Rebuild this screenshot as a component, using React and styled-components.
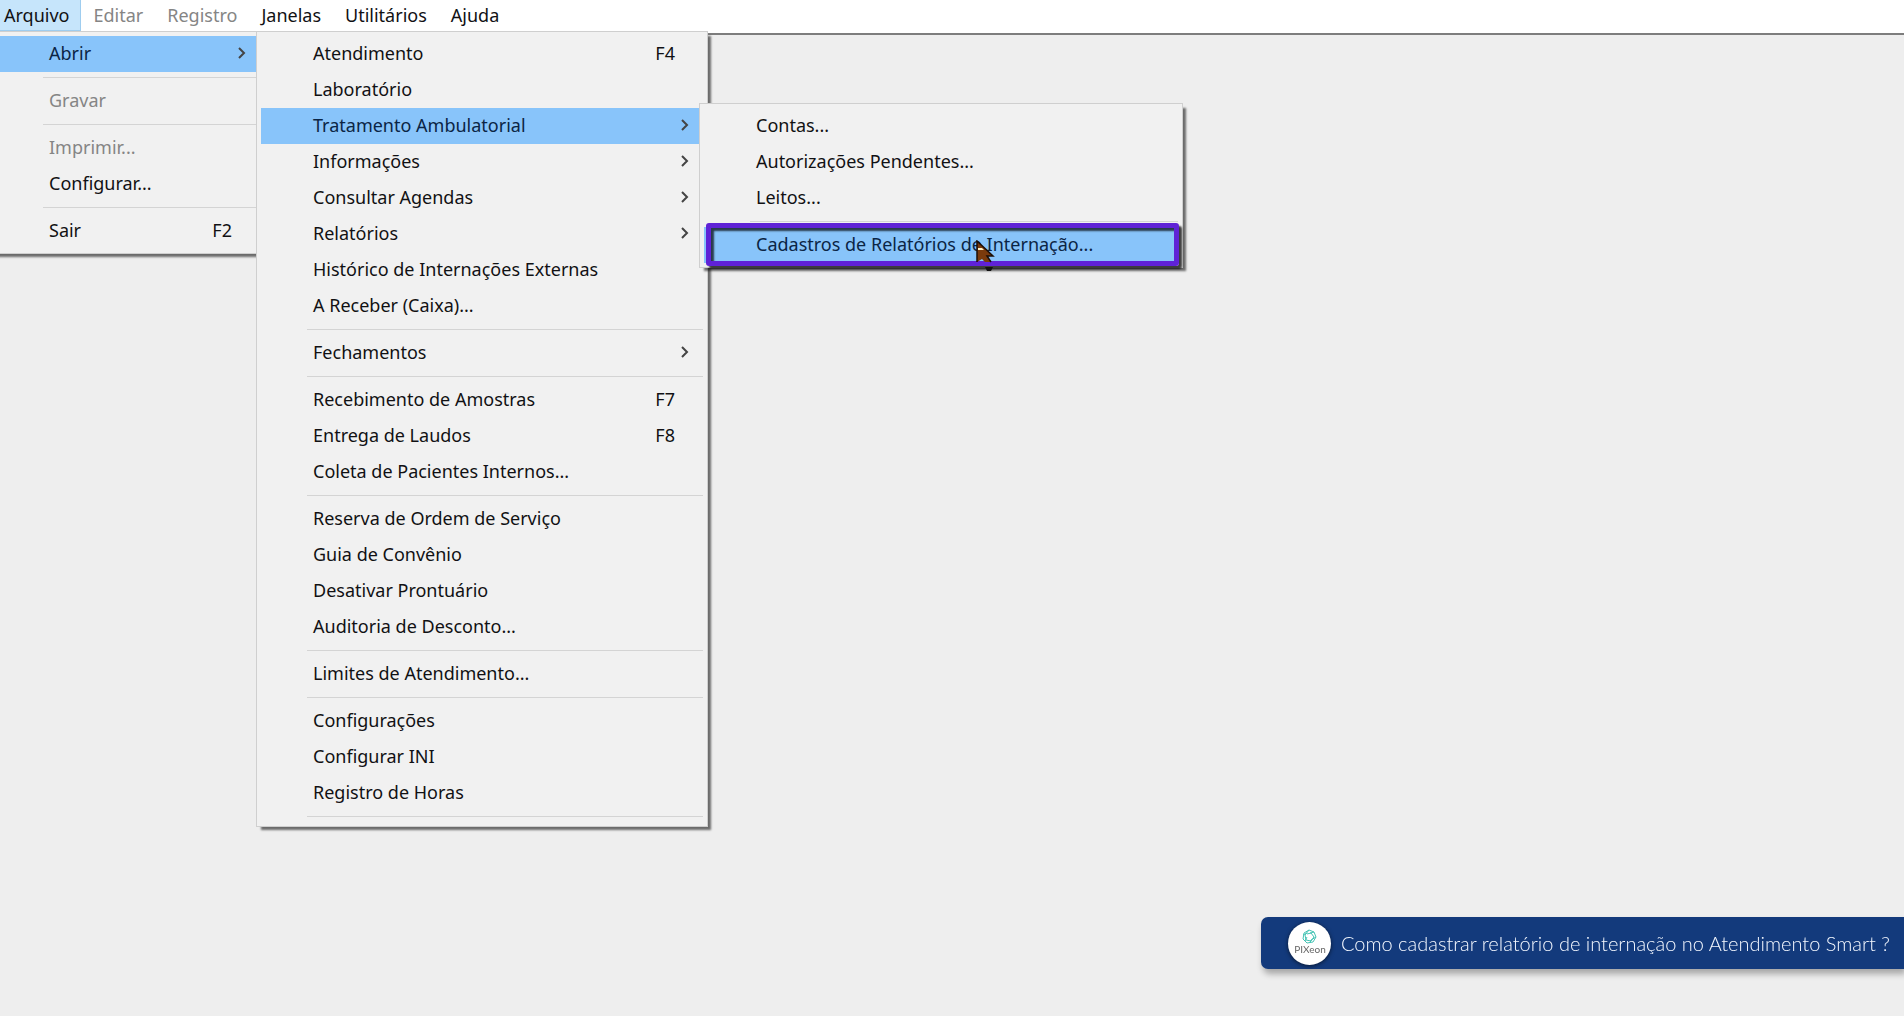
import React from 'react'
import styled, { createGlobalStyle } from 'styled-components'

const GlobalStyle = createGlobalStyle`
  * {
    box-sizing: border-box;
  }
  body {
    margin: 0;
    background: #eeeeee;
    font-family: 'Noto Sans', 'Open Sans', sans-serif;
    font-size: 18px;
    color: #111114;
  }
  ul {
    margin: 0;
    padding: 0;
    list-style: none;
  }
  button {
    font: inherit;
    color: inherit;
    border: 0;
    background: none;
  }
`

const Page = styled.div`
  display: flex;
  flex-direction: column;
  min-height: 100vh;
  overflow: hidden;
`

const MenuBar = styled.nav`
  height: 33px;
  padding-bottom: 2px;
  background: #fff;
`

const BarList = styled.ul`
  display: flex;
  height: 100%;
  margin-left: -8px;
`

const BarItem = styled.li`
  position: relative;
`

const BarButton = styled.button`
  height: 100%;
  padding: 0 12px 2px;
  line-height: 26px;
  background: ${({ $open }) => ($open ? '#c6e5fb' : 'transparent')};
  box-shadow: ${({ $open }) => ($open ? 'inset -1px -1px 0 #9fcdef' : 'none')};
  &:disabled {
    color: #858585;
  }
`

const Workspace = styled.main`
  flex: 1;
  border-top: 2px solid #7d7d7d;
`

const Panel = styled.ul`
  position: absolute;
  z-index: 2;
  top: ${({ $sub }) => ($sub ? '-5px' : '100%')};
  left: ${({ $sub }) => ($sub ? 'calc(100% - 4px)' : '0')};
  width: ${({ $width }) => $width}px;
  padding: 4px;
  background: #f1f1f1;
  border: 1px solid #cfcfcf;
  box-shadow: 4px 4px 2px -1px rgba(0, 0, 0, 0.55);
`

const Entry = styled.li`
  position: relative;
`

const EntryButton = styled.button`
  display: flex;
  align-items: center;
  width: 100%;
  height: 36px;
  padding: 0 14px 2px 52px;
  text-align: left;
  white-space: nowrap;
  color: ${({ $active }) => ($active ? '#0b2545' : 'inherit')};
  background: ${({ $active }) => ($active ? '#88c4fa' : 'transparent')};
  &:disabled {
    color: #858585;
  }
`

const Label = styled.span`
  flex: 1;
`

const Shortcut = styled.kbd`
  padding-right: 14px;
  font: inherit;
`

const Arrow = styled.svg`
  width: 8px;
  height: 12px;
`

const Separator = styled.li`
  height: 11px;
  margin-left: 46px;
  padding-top: 5px;
  &::after {
    content: '';
    display: block;
    height: 1px;
    background: #d4d4d4;
  }
`

/* purple frame over the last entry */
const Marker = styled.span`
  position: absolute;
  inset: -4px -1px -3px 2px;
  border: 5px solid #5f22d6;
  border-radius: 3px;
  box-shadow: 3px 3px 2px rgba(0, 0, 0, 0.75), inset 3px 3px 2px rgba(0, 0, 0, 0.7);
  pointer-events: none;
`

const Pointer = styled.svg`
  position: absolute;
  top: 13px;
  left: 271px;
  width: 20px;
  height: 32px;
  pointer-events: none;
`

const Banner = styled.aside`
  position: fixed;
  right: 0;
  bottom: 47px;
  display: flex;
  align-items: center;
  gap: 10px;
  height: 52px;
  padding: 0 14px 0 27px;
  color: #f4f8ff;
  font-family: Lato, sans-serif;
  font-size: 20px;
  font-weight: 300;
  background: #133a7c;
  border-radius: 7px 0 0 7px;
  box-shadow: 2px 5px 6px rgba(0, 0, 0, 0.3);
`

const Logo = styled.svg`
  width: 43px;
  height: 43px;
  border-radius: 50%;
  background: #fff;
  box-shadow: 0 1px 4px rgba(0, 0, 0, 0.6);
`

const reportItems = [
  { label: 'Contas...' },
  { label: 'Autorizações Pendentes...' },
  { label: 'Leitos...' },
  null,
  { label: 'Cadastros de Relatórios de Internação...', active: true, marked: true },
]

const openItems = [
  { label: 'Atendimento', shortcut: 'F4' },
  { label: 'Laboratório' },
  { label: 'Tratamento Ambulatorial', active: true, arrow: true, items: reportItems, width: 484 },
  { label: 'Informações', arrow: true },
  { label: 'Consultar Agendas', arrow: true },
  { label: 'Relatórios', arrow: true },
  { label: 'Histórico de Internações Externas' },
  { label: 'A Receber (Caixa)...' },
  null,
  { label: 'Fechamentos', arrow: true },
  null,
  { label: 'Recebimento de Amostras', shortcut: 'F7' },
  { label: 'Entrega de Laudos', shortcut: 'F8' },
  { label: 'Coleta de Pacientes Internos...' },
  null,
  { label: 'Reserva de Ordem de Serviço' },
  { label: 'Guia de Convênio' },
  { label: 'Desativar Prontuário' },
  { label: 'Auditoria de Desconto...' },
  null,
  { label: 'Limites de Atendimento...' },
  null,
  { label: 'Configurações' },
  { label: 'Configurar INI' },
  { label: 'Registro de Horas' },
  null,
]

const fileItems = [
  { label: 'Abrir', active: true, arrow: true, items: openItems, width: 452 },
  null,
  { label: 'Gravar', disabled: true },
  null,
  { label: 'Imprimir...', disabled: true },
  { label: 'Configurar...' },
  null,
  { label: 'Sair', shortcut: 'F2' },
]

const bar = [
  { label: 'Arquivo', items: fileItems, width: 273 },
  { label: 'Editar', disabled: true },
  { label: 'Registro', disabled: true },
  { label: 'Janelas' },
  { label: 'Utilitários' },
  { label: 'Ajuda' },
]

const Menu = ({ items, width, sub }) => (
  <Panel $width={width} $sub={sub}>
    {items.map((item, i) =>
      item ? (
        <Entry key={item.label}>
          <EntryButton type="button" $active={item.active} disabled={item.disabled}>
            <Label>{item.label}</Label>
            {item.shortcut && <Shortcut>{item.shortcut}</Shortcut>}
            {item.arrow && (
              <Arrow viewBox="0 0 8 12" fill="none" stroke="#444" strokeWidth="2">
                <path d="M1 1l5 5-5 5" />
              </Arrow>
            )}
          </EntryButton>
          {item.marked && <Marker />}
          {item.marked && <MousePointer />}
          {item.items && <Menu items={item.items} width={item.width} sub />}
        </Entry>
      ) : (
        <Separator key={i} role="separator" />
      )
    )}
  </Panel>
)

const MousePointer = () => (
  <Pointer viewBox="0 0 20 32">
    <path d="M10 27h8l-2 4h-4z" fill="#111" />
    <path d="M2 1l16 15h-6l4 6h-6l-3-3-5 3z" fill="#7a3a0c" />
    <path d="M2 22V1l16 15h-6l4 6" fill="none" stroke="#1c0e06" strokeWidth="1.5" />
    <path d="M3 8h4l2 2H3z" fill="#fff0c4" />
  </Pointer>
)

const PixeonLogo = () => (
  <Logo viewBox="0 0 43 43" role="img" aria-label="Pixeon">
    <g fill="none" stroke="#45c4b4" strokeWidth="1">
      <path d="M21 8l5 2 2 5-3 5-6 1-4-4 1-6z" />
      <path d="M21 8l-4 5 1 5 5 1 3-4-3-4-4 1M26 10l-4 1M28 15l-5 3-1 3M17 19l2-4M15 13l4-2" />
    </g>
    <text x="22" y="31" textAnchor="middle" fontFamily="Lato, sans-serif" fontSize="10" fontWeight="400" fill="#666">
      PIXeon
    </text>
  </Logo>
)

const App = () => (
  <Page>
    <GlobalStyle />
    <MenuBar>
      <BarList>
        {bar.map(({ label, disabled, items, width }) => (
          <BarItem key={label}>
            <BarButton type="button" disabled={disabled} $open={!!items}>
              {label}
            </BarButton>
            {items && <Menu items={items} width={width} />}
          </BarItem>
        ))}
      </BarList>
    </MenuBar>
    <Workspace />
    <Banner>
      <PixeonLogo />
      <span>Como cadastrar relatório de internação no Atendimento Smart ?</span>
    </Banner>
  </Page>
)

export default App
